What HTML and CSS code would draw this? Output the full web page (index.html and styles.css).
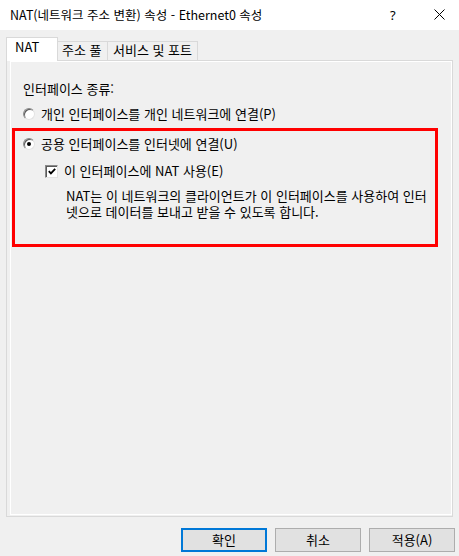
FILE: index.html
```html
<!DOCTYPE html>
<html lang="ko">
<head>
<meta charset="utf-8">
<title>NAT 속성</title>
<link rel="stylesheet" href="styles.css">
</head>
<body>
<div class="window">
  <div class="titlebar">
    <span class="title">NAT(네트워크 주소 변환) 속성 - Ethernet0 속성</span>
    <span class="help">?</span>
    <span class="close"><svg width="11" height="11" viewBox="0 0 11 11"><path d="M0.5 0.5 L10.5 10.5 M10.5 0.5 L0.5 10.5" stroke="#000" stroke-width="1" fill="none"/></svg></span>
  </div>
  <div class="client">
    <div class="tabs">
      <div class="tab tab-nat selected">NAT</div>
      <div class="tab tab-pool">주소 풀</div>
      <div class="tab tab-svc">서비스 및 포트</div>
    </div>
    <div class="panel">
      <div class="panel-inner">
        <div class="row group-label">인터페이스 종류:</div>
        <div class="row radio-row first">
          <span class="radio"></span>
          <span>개인 인터페이스를 개인 네트워크에 연결(P)</span>
        </div>
        <div class="row radio-row second">
          <span class="radio checked"><span class="dot"></span></span>
          <span>공용 인터페이스를 인터넷에 연결(U)</span>
        </div>
        <div class="row check-row">
          <span class="checkbox"><svg width="11" height="11" viewBox="0 0 11 11"><path d="M2 5 L4.3 7.5 L9 2.5" stroke="#000" stroke-width="2" fill="none"/></svg></span>
          <span>이 인터페이스에 NAT 사용(E)</span>
        </div>
        <div class="desc">
          <div class="desc-line">NAT는 이 네트워크의 클라이언트가 이 인터페이스를 사용하여 인터</div>
          <div class="desc-line">넷으로 데이터를 보내고 받을 수 있도록 합니다.</div>
        </div>
      </div>
    </div>
    <div class="buttons">
      <button class="btn default">확인</button>
      <button class="btn">취소</button>
      <button class="btn">적용(A)</button>
    </div>
  </div>
  <div class="highlight"></div>
</div>
</body>
</html>
```
FILE: styles.css
```css
* { box-sizing: border-box; }
html, body {
  margin: 0;
  padding: 0;
  width: 459px;
  height: 556px;
  overflow: hidden;
  background: #f0f0f0;
  font-family: "Noto Sans CJK KR", "Noto Sans", sans-serif;
  font-size: 13px;
  color: #000;
}
.window {
  position: relative;
  width: 459px;
  height: 556px;
}
.titlebar {
  height: 30px;
  background: #fff;
  display: flex;
  align-items: center;
  padding-left: 10px;
}
.title {
  flex: 1;
  font-size: 12.5px;
  line-height: 16px;
  padding-bottom: 1px;
}
.help {
  width: 20px;
  font-family: "Noto Sans", sans-serif;
  font-size: 13px;
  margin-right: 24px;
}
.close {
  display: flex;
  width: 25px;
  padding-bottom: 1px;
}
.client {
  padding: 8px 0 0 6px;
}
.tabs {
  display: flex;
  align-items: flex-end;
  height: 23px;
  margin-bottom: -1px;
  position: relative;
  z-index: 1;
}
.tab {
  height: 19px;
  border: 1px solid #d9d9d9;
  border-bottom: none;
  border-left: none;
  background: #f0f0f0;
  line-height: 16px;
  white-space: nowrap;
  margin-bottom: 1px;
}
.tab.selected {
  height: 24px;
  background: #fff;
  border-left: 1px solid #d9d9d9;
  margin-bottom: 0;
  line-height: 18px;
}
.tab-nat { width: 52px; padding-left: 8px; }
.tab-pool { width: 50px; padding-left: 4px; }
.tab-svc { width: 90px; padding-left: 5px; }
.panel {
  width: 447px;
  height: 457px;
  border: 1px solid #d9d9d9;
  padding: 0 0 1px 3px;
  background: #f0f0f0;
}
.panel-inner {
  height: 100%;
  border: 1px solid #fff;
  padding: 19px 0 0 12px;
}
.row {
  display: flex;
  align-items: center;
  height: 16px;
  line-height: 16px;
  white-space: nowrap;
}
.radio-row.first { margin-top: 9px; }
.radio-row.second { margin-top: 14px; }
.radio {
  width: 12px;
  height: 12px;
  border-radius: 50%;
  border: 1px solid;
  border-color: #8a8a8a #e3e3e3 #e3e3e3 #8a8a8a;
  background: #fff;
  box-shadow: inset 1px 1px 0 #5a5a5a;
  margin-right: 6px;
  display: flex;
  align-items: center;
  justify-content: center;
}
.dot {
  width: 4px;
  height: 4px;
  border-radius: 50%;
  background: #000;
}
.check-row {
  margin-top: 11px;
  padding-left: 22px;
}
.checkbox {
  width: 13px;
  height: 13px;
  border: 1px solid;
  border-color: #8a8a8a #e3e3e3 #e3e3e3 #8a8a8a;
  box-shadow: inset 1px 1px 0 #5a5a5a;
  background: #fff;
  margin-right: 6px;
  display: flex;
  align-items: center;
  justify-content: center;
  padding: 0 0 0 1px;
}
.desc {
  margin-top: 9px;
  padding-left: 43px;
}
.desc-line {
  height: 16px;
  line-height: 16px;
  white-space: nowrap;
}
.buttons {
  display: flex;
  justify-content: flex-end;
  gap: 8px;
  margin-top: 11px;
  padding-right: 4px;
}
.btn {
  width: 86px;
  height: 24px;
  padding: 0;
  border: 1px solid #adadad;
  background: #e1e1e1;
  font-family: inherit;
  font-size: 13px;
  color: #000;
  line-height: 16px;
}
.btn.default {
  border: 2px solid #0078d7;
}
.highlight {
  position: absolute;
  left: 12px;
  top: 128px;
  width: 426px;
  height: 119px;
  border: 3px solid #ff0000;
  pointer-events: none;
}
```
